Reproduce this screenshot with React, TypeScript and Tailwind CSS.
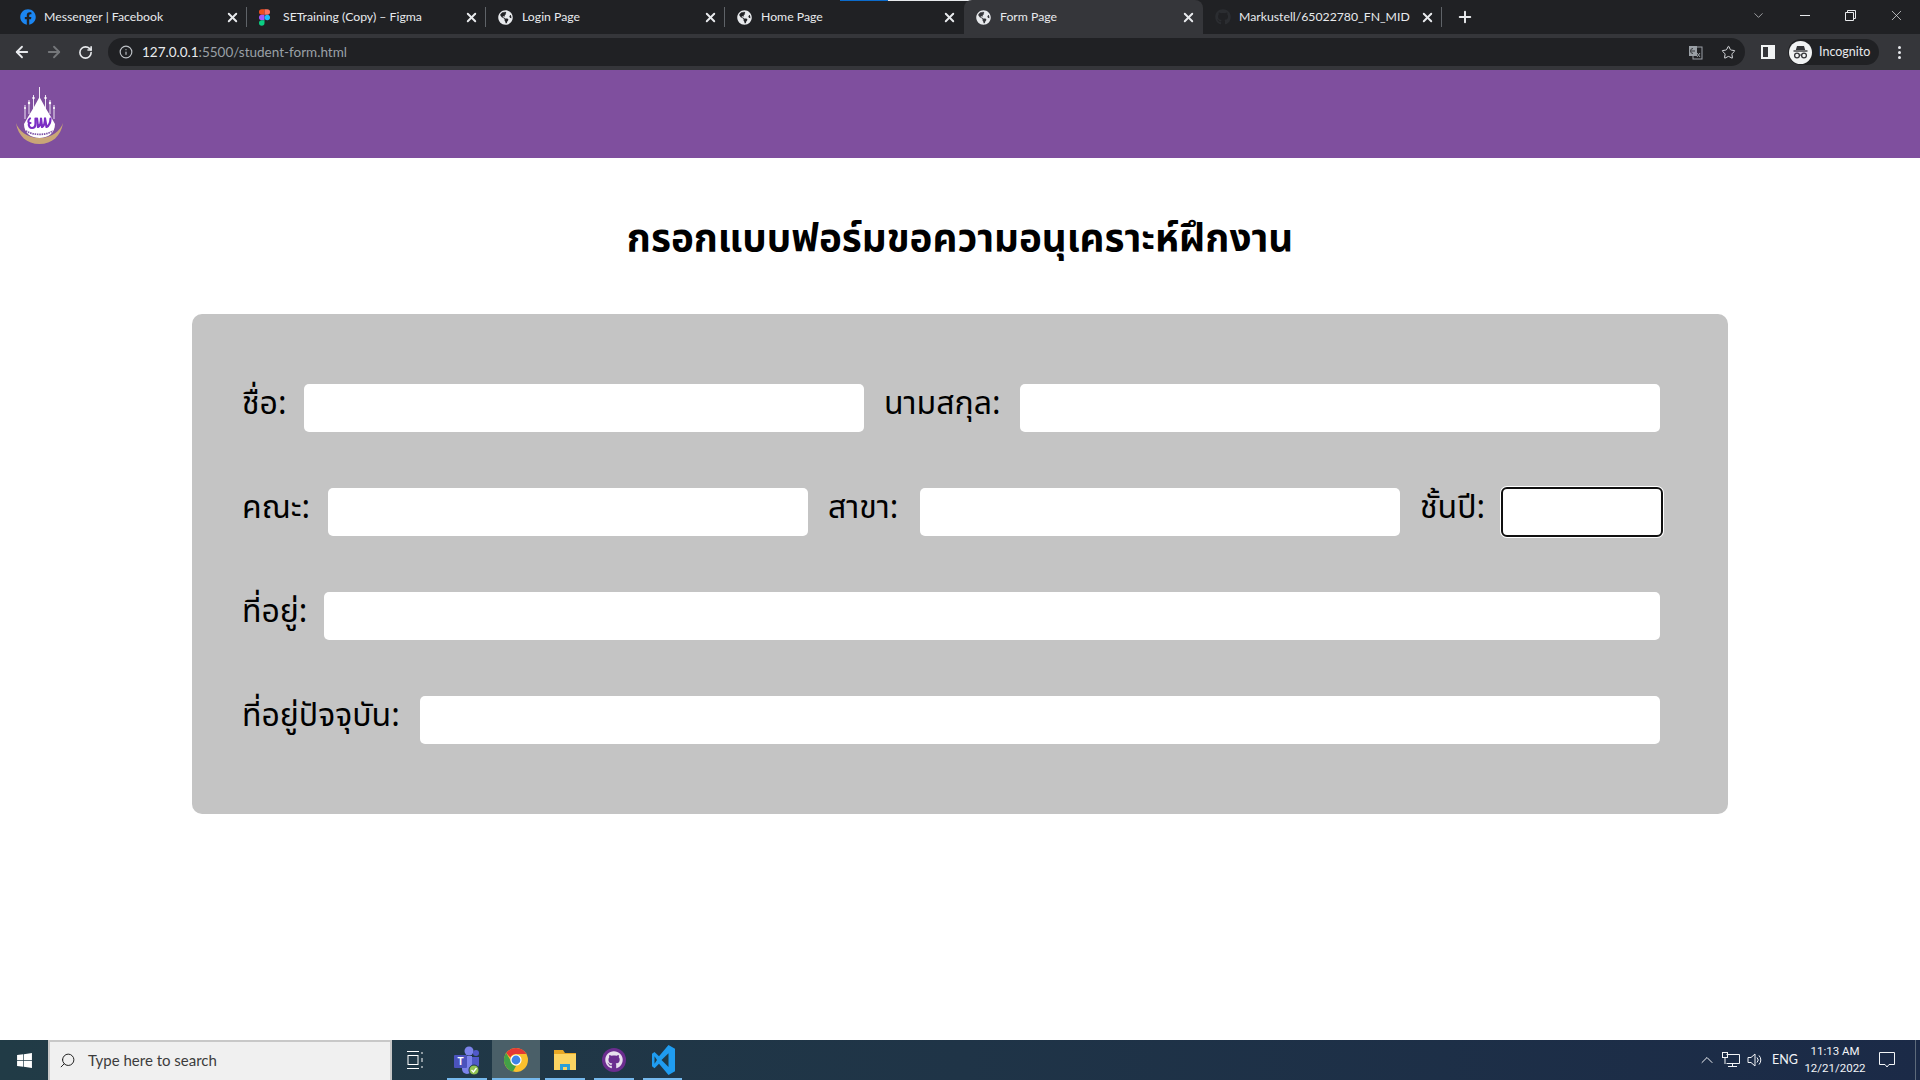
import { ArrowLeft, ArrowRight, ChevronDown, ChevronUp, Info, Plus, RotateCw, Search, Star, X } from 'lucide-react';
import { FaFacebook, FaGithub, FaGlobeAmericas, FaWindows } from 'react-icons/fa';
import type { ReactNode } from 'react';

const uiFont = "[font-family:'Lato','Open_Sans',sans-serif]";
const thaiFont = "[font-family:'Noto_Sans','Noto_Sans_Thai','Liberation_Sans',sans-serif]";

function FigmaIcon() {
  return (
    <svg width="11" height="17" viewBox="0 0 12 18">
      <path d="M3 0h3v6H3a3 3 0 0 1 0-6z" fill="#f24e1e" />
      <path d="M6 0h3a3 3 0 0 1 0 6H6z" fill="#ff7262" />
      <path d="M3 6h3v6H3a3 3 0 0 1 0-6z" fill="#a259ff" />
      <circle cx="9" cy="9" r="3" fill="#1abcfe" />
      <path d="M3 12h3v3a3 3 0 1 1-3-3z" fill="#0acf83" />
    </svg>
  );
}

type TabProps = { icon: ReactNode; title: string; active?: boolean; separator?: boolean };

function Tab({ icon, title, active, separator }: TabProps) {
  return (
    <div
      className={`relative flex h-[34px] w-[239px] shrink-0 items-center pl-[12px] pr-[7px] text-[12.25px] text-[#e8eaed] ${
        active ? 'rounded-t-lg bg-[#35363a]' : ''
      }`}
    >
      <span className="flex w-[24px] shrink-0 items-center">{icon}</span>
      <span className="flex-1 truncate">{title}</span>
      <X size={15} strokeWidth={3} className="text-[#e8eaed]" />
      {separator && <span className="absolute right-0 top-[7px] h-[20px] w-px bg-[#5f6368]" />}
    </div>
  );
}

function Logo() {
  return (
    <svg width="48" height="58" viewBox="0 0 48 58">
      {/* spires */}
      <g stroke="#eee6f4" strokeWidth="1" fill="none">
        <path d="M23.5 0v16M17.5 8v14M29.5 8v14M13 13v14M34 13v14M9 18v14M38 18v14" />
      </g>
      <g fill="#fff">
        <circle cx="17.5" cy="11" r="1.2" />
        <circle cx="29.5" cy="11" r="1.2" />
        <circle cx="13" cy="16" r="1.2" />
        <circle cx="34" cy="16" r="1.2" />
        <circle cx="9" cy="21" r="1" />
        <circle cx="38" cy="21" r="1" />
      </g>
      <path d="M23.5 10 L29 20 L35 30 L39 37 C39 46 32 51 23.5 51 C15 51 8 46 8 37 L12 30 L18 20 Z" fill="#fff" />
      {/* crest */}
      <g stroke="#7b2fc4" strokeWidth="2.2" fill="none" strokeLinecap="round" strokeLinejoin="round">
        <path d="M14 31.5c-2.500 2-2 5 .5 4.500M13 36c-1 3 1 5 3 5 2.500 0 3.500-2 3.500-4.500v-5" />
        <path d="M21 31.500l1 8.500c2-1 3-3.500 3-8.500l1 8.500c2-1 3-3.500 3-8.500" />
        <path d="M29 31.500l1.500 8.500c2-1 4-4 4-8.500" />
      </g>
      <path d="M10 44 C17 48.500 30 48.500 37 44" stroke="#7f55a8" strokeWidth="1.7" fill="none" strokeDasharray="1.500 .8" />
      {/* crescent */}
      <path d="M0 36 C2 49 11 57 23.500 57 C36 57 45 49 47 36 C44 44 36 51 23.500 51 C11 51 3 44 0 36 Z" fill="#c9a677" />
    </svg>
  );
}

function TranslateIcon() {
  return (
    <svg width="15" height="15" viewBox="0 0 15 15">
      <rect x="5" y="2" width="9" height="12" fill="none" stroke="#9aa0a6" />
      <rect x="1" y="1" width="8" height="10" fill="#9aa0a6" />
      <path d="M3 6h4M5 3.500a2 2 0 1 0 0 5" stroke="#35363a" fill="none" />
      <path d="M9 8l3 4M12 8l-3 4" stroke="#9aa0a6" />
    </svg>
  );
}

function IncognitoIcon() {
  return (
    <span className="flex h-[23px] w-[23px] items-center justify-center rounded-full bg-[#f1f3f4]">
      <svg width="17" height="17" viewBox="0 0 17 17">
        <path d="M5 2h7l1.200 4H3.800z" fill="#35363a" />
        <path d="M1.500 7h14" stroke="#35363a" strokeWidth="1.4" />
        <circle cx="5" cy="11.500" r="2.400" fill="none" stroke="#35363a" strokeWidth="1.3" />
        <circle cx="12" cy="11.500" r="2.400" fill="none" stroke="#35363a" strokeWidth="1.3" />
        <path d="M7.400 11h2.200" stroke="#35363a" />
      </svg>
    </span>
  );
}

function TeamsIcon() {
  return (
    <svg width="26" height="30" viewBox="0 0 26 30">
      <circle cx="15" cy="6" r="4.500" fill="#7b83eb" />
      <circle cx="22" cy="8" r="3" fill="#5059c9" />
      <path d="M8 11h10v13a5 5 0 0 1-10 0z" fill="#7b83eb" />
      <path d="M18 12h7v8a4 4 0 0 1-7 2z" fill="#5059c9" />
      <rect x="0" y="10" width="13" height="13" rx="1" fill="#4b53bc" />
      <text x="6.500" y="20" textAnchor="middle" fontSize="10" fontWeight="700" fill="#fff" fontFamily="Liberation Sans">T</text>
      <circle cx="20" cy="25" r="5" fill="#92c353" stroke="#1f3a46" strokeWidth="1" />
      <path d="M17.500 25l2 2 3-4" stroke="#fff" strokeWidth="1.3" fill="none" />
    </svg>
  );
}

function ChromeIcon() {
  return (
    <svg width="24" height="24" viewBox="0 0 24 24">
      <circle cx="12" cy="12" r="12" fill="#fbc02d" />
      <path d="M12 0a12 12 0 0 1 10.400 6H12a6 6 0 0 0-5.600 3.600L2.200 5A12 12 0 0 1 12 0z" fill="#e53935" />
      <path d="M2.200 5l5 8.600A6 6 0 0 0 12 18l-3 5.600A12 12 0 0 1 2.200 5z" fill="#43a047" />
      <circle cx="12" cy="12" r="5.600" fill="#fff" />
      <circle cx="12" cy="12" r="4.400" fill="#3f84e8" />
    </svg>
  );
}

function FolderIcon() {
  return (
    <svg width="24" height="24" viewBox="0 0 24 24">
      <path d="M1 2h9l2 3h11v3H1z" fill="#e9a825" />
      <rect x="1" y="6" width="22" height="16" fill="#fcd462" />
      <path d="M7 22v-6h10v6h-3v-3h-4v3z" fill="#2d9fd8" />
    </svg>
  );
}

function VsCodeIcon() {
  return (
    <svg width="24" height="30" viewBox="0 0 24 24" preserveAspectRatio="none">
      <path d="M17.500 0L24 3v18l-6.500 3-9.500-9-4.500 3.500L1 17v-10l2.500-1.500L8 9z" fill="#1f9cf0" />
      <path d="M17.500 6.500L10.500 12l7 5.500z" fill="#1f3a46" />
      <path d="M3.500 9L6 12l-2.500 3z" fill="#1f3a46" />
    </svg>
  );
}

function TaskViewIcon() {
  return (
    <svg width="16" height="20" viewBox="0 0 16 20" fill="none" stroke="#fff" strokeWidth="1">
      <path d="M0 1.500h12M0 18.500h12" />
      <rect x="1" y="5.500" width="10" height="9" />
      <path d="M15 2v2M15 8v4M15 16v2" />
    </svg>
  );
}

function TaskbarIcon({ children, width, active, bar = true }: { children: ReactNode; width: string; active?: boolean; bar?: boolean }) {
  return (
    <div className={`relative flex h-full shrink-0 items-center justify-center ${width} ${active ? 'bg-[#4a5f68]' : ''}`}>
      {children}
      {bar && <span className="absolute inset-x-0 bottom-0 h-[2px] bg-[#76b9ed]" />}
    </div>
  );
}

function Field({ className = '', focused }: { className?: string; focused?: boolean }) {
  return (
    <input
      type="text"
      aria-label="field"
      className={`h-12 rounded-[5px] bg-white ${
        focused ? 'outline-2 -outline-offset-1 outline-[#101010] shadow-[0_0_0_2px_#ffffff]' : ''
      } ${className}`}
    />
  );
}

function Label({ children, width, className = '' }: { children: ReactNode; width: string; className?: string }) {
  return <label className={`h-12 shrink-0 whitespace-nowrap text-[32px] leading-[36px] text-black ${width} ${className}`}>{children}</label>;
}

export default function App() {
  return (
    <div className={`flex h-[1080px] w-[1920px] flex-col overflow-hidden bg-white ${uiFont}`}>
      {/* chrome tab strip */}
      <div className="relative flex h-[34px] shrink-0 items-center bg-[#202124] pl-[8px]">
        <span className="absolute left-[840px] top-0 h-px w-[48px] bg-[#0b6bcb]" />
        <span className="absolute left-[888px] top-0 h-px w-[193px] bg-[#e8eaed]" />
        <Tab icon={<FaFacebook size={16} className="text-[#1b86f2]" />} title="Messenger | Facebook" separator />
        <Tab icon={<FigmaIcon />} title="SETraining (Copy) – Figma" separator />
        <Tab icon={<FaGlobeAmericas size={15} />} title="Login Page" separator />
        <Tab icon={<FaGlobeAmericas size={15} />} title="Home Page" />
        <Tab icon={<FaGlobeAmericas size={15} />} title="Form Page" active />
        <Tab icon={<FaGithub size={16} className="text-[#2b2d31]" />} title="Markustell/65022780_FN_MID" separator />
        <Plus size={18} strokeWidth={2.6} className="ml-[14px] text-[#e8eaed]" />
        <div className="ml-auto flex items-center pb-[4px] text-[#e8eaed]">
          <ChevronDown size={15} strokeWidth={1} className="mr-[34px]" />
          <span className="mr-[35px] h-px w-[10px] bg-[#e8eaed]" />
          <svg width="11" height="11" viewBox="0 0 11 11" fill="none" stroke="#e8eaed" className="mr-[32px]">
            <path d="M.5 2.500h8v8h-8zM2.500 2.500v-2h8v8h-2" />
          </svg>
          <X size={17} strokeWidth={1} className="mr-[15px]" />
        </div>
      </div>

      {/* chrome toolbar */}
      <div className="flex h-[36px] shrink-0 items-center bg-[#35363a] text-[#e8eaed]">
        <ArrowLeft size={18} strokeWidth={2.4} className="ml-[13px]" />
        <ArrowRight size={18} strokeWidth={2.4} className="ml-[14px] text-[#75777a]" />
        <RotateCw size={15} strokeWidth={2.6} className="ml-[15px]" />
        <div className="ml-[15px] flex h-[28px] w-[1637px] items-center rounded-full bg-[#202124] pl-[11px] pr-[8px] text-[13.5px]">
          <Info size={14} className="text-[#bdc1c6]" />
          <span className="ml-[9px] text-[#e8eaed]">127.0.0.1</span>
          <span className="text-[#9aa0a6]">:5500/student-form.html</span>
          <span className="ml-auto"><TranslateIcon /></span>
          <Star size={15} strokeWidth={1.6} className="ml-[18px] mr-[1px] text-[#dadce0]" />
        </div>
        <span className="ml-[16px] h-[14px] w-[14px] border-[2px] border-r-[7px] border-[#f1f3f4] bg-[#35363a]" />
        <div className="ml-[13px] flex h-[26px] w-[91px] items-center rounded-full bg-[#202124] pl-[1px] text-[12.5px]">
          <IncognitoIcon />
          <span className="ml-[7px]">Incognito</span>
        </div>
        <span className="ml-[19px] flex flex-col gap-[2px]">
          <span className="h-[3px] w-[3px] rounded-full bg-[#e8eaed]" />
          <span className="h-[3px] w-[3px] rounded-full bg-[#e8eaed]" />
          <span className="h-[3px] w-[3px] rounded-full bg-[#e8eaed]" />
        </span>
      </div>

      {/* page */}
      <header className="flex h-[88px] shrink-0 items-start bg-[#7f4f9e] pl-[16px] pt-[17px]">
        <Logo />
      </header>

      <main className={`flex min-h-0 flex-1 flex-col ${thaiFont}`}>
        <h1 className="mt-[52px] h-[52px] text-center text-[38.6px] font-bold leading-[52px] text-black">
          กรอกแบบฟอร์มขอความอนุเคราะห์ฝึกงาน
        </h1>
        <form className="mx-[192px] mt-[52px] flex h-[500px] flex-col gap-[56px] rounded-[10px] bg-[#c4c4c4] pb-[70px] pl-[50px] pr-[68px] pt-[70px]">
          <div className="flex">
            <Label width="w-[62px]">ชื่อ:</Label>
            <Field className="w-[560px]" />
            <Label width="w-[136px]" className="ml-[20px]">นามสกุล:</Label>
            <Field className="flex-1" />
          </div>
          <div className="flex">
            <Label width="w-[86px]">คณะ:</Label>
            <Field className="w-[480px] shrink-0" />
            <Label width="w-[92px]" className="ml-[20px]">สาขา:</Label>
            <Field className="w-[480px] shrink-0" />
            <Label width="w-[82px]" className="ml-[20px]">ชั้นปี:</Label>
            <Field className="w-[160px] shrink-0" focused />
          </div>
          <div className="flex">
            <Label width="w-[82px]">ที่อยู่:</Label>
            <Field className="flex-1" />
          </div>
          <div className="flex">
            <Label width="w-[178px]">ที่อยู่ปัจจุบัน:</Label>
            <Field className="flex-1" />
          </div>
        </form>
      </main>

      {/* windows taskbar */}
      <footer className="flex h-[40px] shrink-0 items-center bg-gradient-to-r from-[#213b46] via-[#1f3447] to-[#1b2a47] text-white">
        <div className="flex h-full w-[48px] items-center justify-center">
          <FaWindows size={17} />
        </div>
        <div className="flex h-full w-[344px] items-center border-2 border-b-0 border-[#c8c8c8] bg-[#f0f0f0] pb-[1px] pl-[9px] text-[15px] text-[#3c3c3c]">
          <Search size={17} strokeWidth={1.4} className="-scale-x-100 text-[#222]" />
          <span className="ml-[12px]">Type here to search</span>
        </div>
        <TaskbarIcon width="w-[46px]" bar={false}><TaskViewIcon /></TaskbarIcon>
        <div className="w-[9px]" />
        <TaskbarIcon width="w-[40px]"><TeamsIcon /></TaskbarIcon>
        <div className="w-[5px]" />
        <TaskbarIcon width="w-[48px]" active><ChromeIcon /></TaskbarIcon>
        <div className="w-[5px]" />
        <TaskbarIcon width="w-[40px]"><FolderIcon /></TaskbarIcon>
        <div className="w-[9px]" />
        <TaskbarIcon width="w-[40px]">
          <span className="flex h-[24px] w-[24px] items-center justify-center rounded-full bg-[#6b2d8f]">
            <FaGithub size={18} className="text-[#e8e0ee]" />
          </span>
        </TaskbarIcon>
        <div className="w-[9px]" />
        <TaskbarIcon width="w-[39px]"><VsCodeIcon /></TaskbarIcon>

        <div className="ml-auto flex h-full items-center text-[#f2f4f7]">
          <ChevronUp size={20} strokeWidth={1.2} />
          <svg width="18" height="16" viewBox="0 0 18 16" fill="none" stroke="#f2f4f7" className="ml-[5px]">
            <path d="M4.500 2.500h13v9h-13M10.500 11.500v3M6 14.500h9" />
            <rect x=".5" y=".5" width="5" height="5" />
            <path d="M3 6v6" />
          </svg>
          <svg width="16" height="16" viewBox="0 0 16 16" fill="none" stroke="#f2f4f7" className="ml-[7px]">
            <path d="M1 5.500h3l4-3.500v12l-4-3.500H1z" />
            <path d="M10 5.500a3.500 3.500 0 0 1 0 5M12 3.500a6.500 6.500 0 0 1 0 9" />
          </svg>
          <span className="ml-[9px] w-[24px] text-center text-[12.5px]">ENG</span>
          <div className="ml-[7px] flex w-[64px] flex-col items-center text-[11.5px] leading-[17px] [font-family:'Roboto',sans-serif]">
            <span>11:13 AM</span>
            <span>12/21/2022</span>
          </div>
          <svg width="17" height="16" viewBox="0 0 17 16" fill="none" stroke="#f2f4f7" className="ml-[12px]">
            <path d="M.5.5h15v12H10l-2 2.500-2-2.500H.5z" />
          </svg>
          <span className="ml-[19px] h-full w-px bg-[#5d6a7a]" />
          <span className="w-[4px]" />
        </div>
      </footer>
    </div>
  );
}
